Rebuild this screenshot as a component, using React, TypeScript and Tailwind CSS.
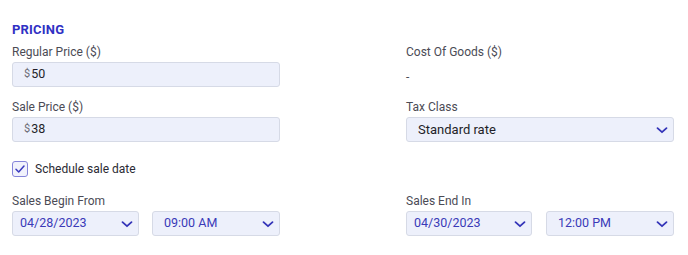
import type { ReactNode } from "react";

const font = { fontFamily: "Roboto, 'Noto Sans', sans-serif" };

function Chevron() {
  return (
    <svg width="12" height="12" viewBox="0 0 12 12" fill="none" className="shrink-0">
      <path d="M1.5 4.2 6 8.2l4.5-4" stroke="#3434b8" strokeWidth="1.8" strokeLinecap="round" strokeLinejoin="round" />
    </svg>
  );
}

function Label({ children }: { children: ReactNode }) {
  return <p className="text-[12px] leading-[14px] text-[#4b4b55]">{children}</p>;
}

function PriceInput({ value }: { value: string }) {
  return (
    <div className="mt-[3px] flex h-[25px] items-center rounded-[3px] border border-[#d6dae6] bg-[#edf0fb] pl-[11px]">
      <span className="text-[11px] text-[#6b6b75]">$</span>
      <span className="ml-[1px] text-[12.5px] text-[#1f1f28]">{value}</span>
    </div>
  );
}

function Select({ value, blue, pl = "pl-[11px]" }: { value: string; blue?: boolean; pl?: string }) {
  return (
    <div
      className={`flex h-[25px] items-center justify-between rounded-[3px] border border-[#d6dae6] bg-[#edf0fb] pr-[5px] ${pl}`}
    >
      <span className={`${blue ? "text-[12.5px] text-[#3a3ab8]" : "text-[13px] text-[#1f1f28]"}`}>{value}</span>
      <Chevron />
    </div>
  );
}

export default function App() {
  return (
    <div className="h-[255px] w-[688px] bg-white" style={font}>
      <div className="px-3 pt-[22px]">
        <h2 className="text-[13px] font-bold leading-[15px] tracking-[0.2px] text-[#3030c4]">PRICING</h2>

        <div className="mt-[8px] grid grid-cols-[268px_268px] gap-x-[126px]">
          <div>
            <Label>Regular Price ($)</Label>
            <PriceInput value="50" />
          </div>
          <div>
            <Label>Cost Of Goods ($)</Label>
            <p className="pt-[11px] text-[12px] leading-[14px] text-[#4b4b55]">-</p>
          </div>

          <div className="mt-[13px]">
            <Label>Sale Price ($)</Label>
            <PriceInput value="38" />
          </div>
          <div className="mt-[13px]">
            <Label>Tax Class</Label>
            <div className="mt-[3px]">
              <Select value="Standard rate" />
            </div>
          </div>
        </div>

        <label className="mt-[18px] flex items-center gap-[7px]">
          <span className="flex h-[16px] w-[16px] items-center justify-center rounded-[3px] border border-[#8585da] bg-[#f1f2fc]">
            <svg width="12" height="12" viewBox="0 0 12 12" fill="none">
              <path d="M2 6.3 4.7 9 10 3" stroke="#3a3abf" strokeWidth="1.5" strokeLinecap="round" strokeLinejoin="round" />
            </svg>
          </span>
          <span className="text-[12px] text-[#2a2a33]">Schedule sale date</span>
        </label>

        <div className="mt-[16px] grid grid-cols-[268px_268px] gap-x-[126px]">
          <div>
            <Label>Sales Begin From</Label>
            <div className="mt-[3px] grid grid-cols-[127px_128px] gap-x-[13px]">
              <Select value="04/28/2023" blue pl="pl-[7px]" />
              <Select value="09:00 AM" blue />
            </div>
          </div>
          <div>
            <Label>Sales End In</Label>
            <div className="mt-[3px] grid grid-cols-[126px_128px] gap-x-[14px]">
              <Select value="04/30/2023" blue pl="pl-[7px]" />
              <Select value="12:00 PM" blue />
            </div>
          </div>
        </div>
      </div>
    </div>
  );
}
